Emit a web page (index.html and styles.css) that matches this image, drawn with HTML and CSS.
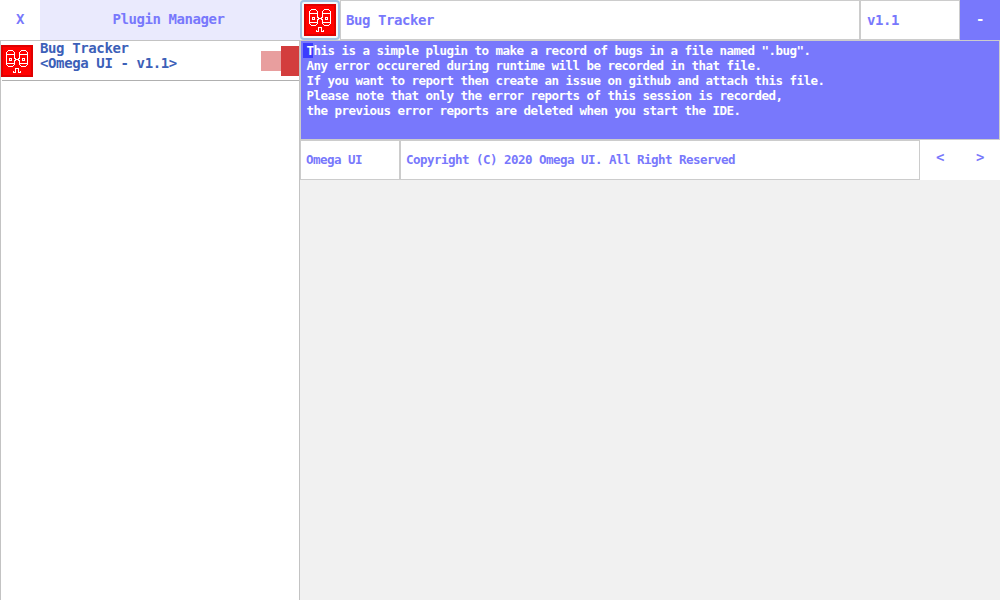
FILE: index.html
```
<!DOCTYPE html>
<html lang="en">
<head>
<meta charset="utf-8">
<title>Plugin Manager</title>
<link rel="stylesheet" href="styles.css">
</head>
<body>
<svg class="defs" aria-hidden="true">
  <symbol id="bug" viewBox="0 0 32 32">
    <g shape-rendering="crispEdges">
    <path fill="#df0000" d="M0 0h32v32H0z"/>
    <path fill="#f00" d="M2 2h28v28H2z"/>
    <path fill="none" stroke="#fff" d="M7 5.5h5M20 5.5h5M6 6.5h1M12 6.5h1M19 6.5h1M25 6.5h1M5.5 7v13M13.5 7v6M18.5 7v6M26.5 7v13M6 9.5h7M19 9.5h7M6 18.5h7M19 18.5h7M13.5 15v5M18.5 15v5M6 20.5h1M12 20.5h1M19 20.5h1M25 20.5h1M7 21.5h5M20 21.5h5M8 13.5h3M8 15.5h3M8.5 13v3M10.5 13v3M21 13.5h3M21 15.5h3M21.5 13v3M23.5 13v3M13 13.5h2M17 13.5h2M14 14.5h4M13 15.5h2M17 15.5h2M12 27.5h3M12.5 26v2M14.5 23v5M15 23.5h2M17.5 23v5M17 27.5h3M19.5 26v2"/>
    </g>
  </symbol>
</svg>
<div class="window">
  <aside class="sidebar">
    <header class="titlebar">
      <button class="close">X</button>
      <h1 class="title">Plugin Manager</h1>
    </header>
    <div class="list">
      <div class="item">
        <svg class="icon"><use href="#bug"/></svg>
        <div class="item-text">Bug Tracker<br>&lt;Omega UI - v1.1&gt;</div>
        <div class="switch"><span class="track"></span><span class="knob"></span></div>
      </div>
    </div>
  </aside>
  <main class="details">
    <header class="head">
      <div class="icon-button"><svg class="icon"><use href="#bug"/></svg></div>
      <div class="field name">Bug Tracker</div>
      <div class="field version">v1.1</div>
      <button class="minimize">-</button>
    </header>
    <div class="description">This is a simple plugin to make a record of bugs in a file named ".bug".
Any error occurered during runtime will be recorded in that file.
If you want to report then create an issue on github and attach this file.
Please note that only the error reports of this session is recorded,
the previous error reports are deleted when you start the IDE.</div>
    <footer class="foot">
      <div class="field author">Omega UI</div>
      <div class="field copyright">Copyright (C) 2020 Omega UI. All Right Reserved</div>
      <button class="nav">&lt;</button>
      <button class="nav">&gt;</button>
    </footer>
  </main>
</div>
</body>
</html>
```
FILE: styles.css
```
* { box-sizing: border-box; }
body { margin: 0; font: bold 14px/15px "DejaVu Sans Mono", monospace; letter-spacing: -0.428px; color: #7878fc; }
button { border: 0; padding: 0 0 1px; margin: 0; font: inherit; letter-spacing: inherit; color: inherit; background: #fff; width: 40px; height: 40px; }
.defs { display: none; }
.window { display: flex; width: 1000px; height: 600px; background: #f1f1f1; }
.sidebar { display: flex; flex-direction: column; width: 300px; background: #fff; }
.titlebar { display: flex; height: 40px; }
.title { flex: 1; margin: 0; padding-right: 3px; font: inherit; line-height: 39px; text-align: center; background: #eaeafd; }
.list { flex: 1; border: 1px solid #c3c3c3; border-bottom: 0; }
.item { display: flex; align-items: flex-start; height: 40px; margin-left: 1px; border-bottom: 1px solid #b0b0b0; color: #3c60b8; }
.item .icon { margin: 4px 0 0 -1px; }
.icon { display: block; width: 32px; height: 32px; flex: none; }
.item-text { flex: 1; padding-left: 7px; white-space: nowrap; letter-spacing: -0.38px; }
.switch { display: flex; align-items: center; height: 30px; margin-top: 5px; }
.track { width: 20px; height: 20px; background: #e89e9e; }
.knob { width: 18px; height: 30px; background: #d33d3d; }
.details { width: 700px; }
.head, .foot { display: flex; height: 40px; }
.icon-button { width: 40px; height: 40px; padding: 2px; border: 2px solid #a4c3e2; border-radius: 4px; background: #f4f8fc; }
.field { border: 1px solid #cccccc; padding-left: 5px; line-height: 38px; background: #fff; white-space: pre; }
.name { width: 520px; }
.version { width: 100px; padding-left: 6px; }
.minimize { background: #7878fc; color: #fff; }
.description { height: 100px; padding: 2px 5.5px; border: 1px solid #cccccc; background: linear-gradient(#3c3cfd, #3c3cfd) 2px 2px / 10px 15px no-repeat #7878fc; color: #fff; font-size: 12.5px; letter-spacing: -0.526px; white-space: pre; }
.foot { background: #fff; font-size: 12.5px; letter-spacing: -0.526px; }
.author { width: 100px; }
.copyright { width: 520px; }
.nav { font-size: 14px; padding-bottom: 5px; }
```
